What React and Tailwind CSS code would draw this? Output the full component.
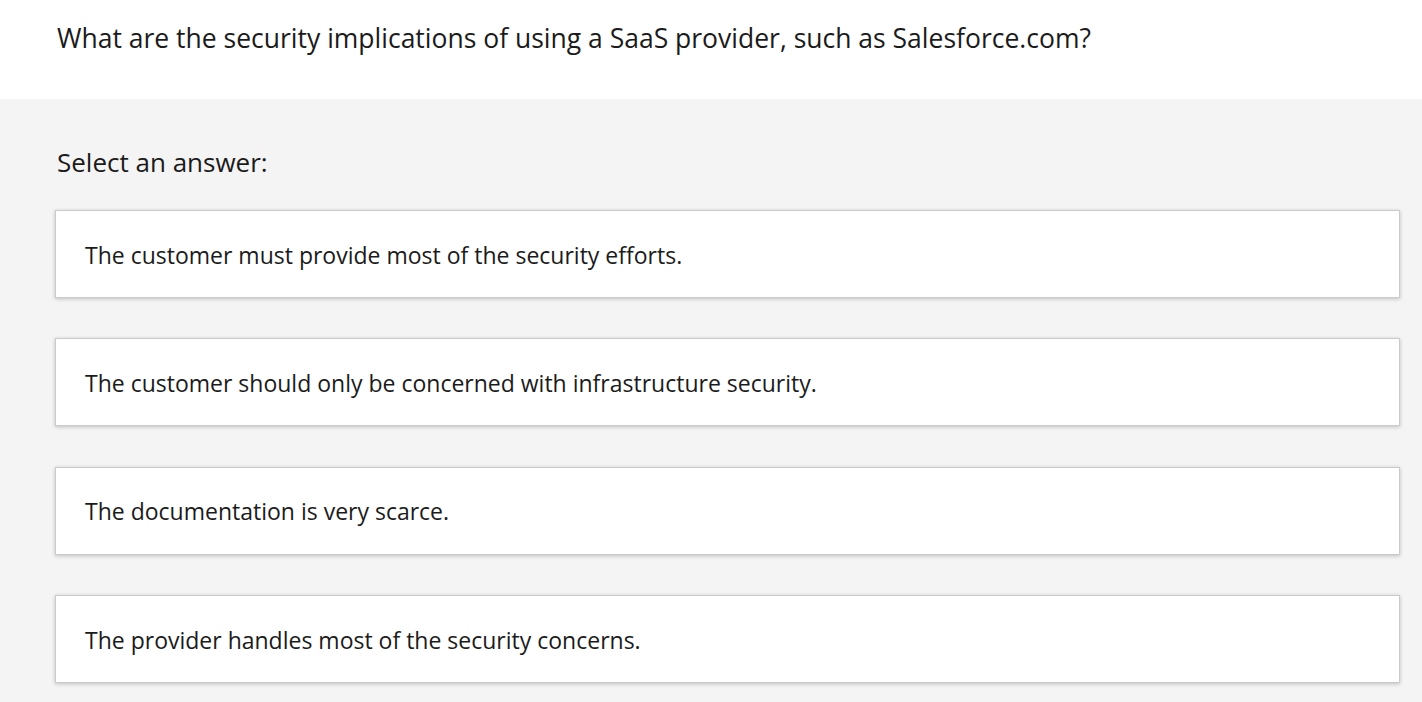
import React from "react";

const answers = [
  "The customer must provide most of the security efforts.",
  "The customer should only be concerned with infrastructure security.",
  "The documentation is very scarce.",
  "The provider handles most of the security concerns.",
];

const App = () => {
  return (
    <div
      className="min-h-screen bg-[#f4f4f4] text-[#1b1b1b]"
      style={{ fontFamily: '"Open Sans", "Noto Sans", sans-serif' }}
    >
      <div className="bg-white h-[99px] px-[57px] pt-[19px]">
        <h1 className="text-[26.5px] leading-[38px]">
          What are the security implications of using a SaaS provider, such as Salesforce.com?
        </h1>
      </div>
      <div className="pl-[55px] pr-[22px] pt-[44px]">
        <p className="pl-[2px] text-[26px] leading-[38px]">Select an answer:</p>
        <div className="mt-[29px] flex flex-col gap-[40.33px]">
          {answers.map((a, i) => (
            <button
              key={i}
              className="h-[88px] w-full text-left bg-white border border-[#cacaca] shadow-[0_1px_4px_rgba(0,0,0,0.22)] px-[29px] pt-[2px] text-[23px]"
            >
              {a}
            </button>
          ))}
        </div>
      </div>
    </div>
  );
};

export default App;
